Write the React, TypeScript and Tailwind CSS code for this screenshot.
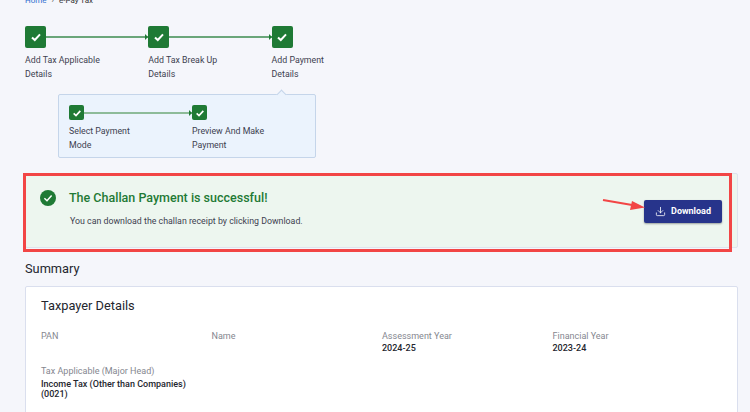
import { Download } from 'lucide-react';

function CheckBox({ small }: { small?: boolean }) {
  return (
    <div
      className={
        small
          ? 'flex h-[15px] w-[15px] shrink-0 items-center justify-center rounded-[2px] bg-[#1f7a35]'
          : 'flex h-[22px] w-[21px] shrink-0 items-center justify-center rounded-[2px] bg-[#1f7a35]'
      }
    >
      <svg
        viewBox="0 0 12 12"
        className={small ? 'h-[10px] w-[10px]' : 'h-[12px] w-[12px]'}
        fill="none"
        stroke="white"
        strokeWidth="2"
      >
        <path d="M2 6.4 L4.8 9 L10 3.4" />
      </svg>
    </div>
  );
}

function Connector({ small }: { small?: boolean }) {
  return (
    <div className={small ? 'relative h-[2px] flex-1 bg-[#8dbb99]' : 'relative h-[2px] flex-1 bg-[#6aa67a]'}>
      <div className="absolute right-0 top-1/2 h-0 w-0 -translate-y-1/2 border-y-[3px] border-l-[3px] border-y-transparent border-l-[#1f7a35]" />
    </div>
  );
}

function Step({ label, last, small }: { label: string[]; last?: boolean; small?: boolean }) {
  return (
    <div className={small ? (last ? 'w-[90px]' : 'w-[123px]') : last ? 'w-[70px]' : 'w-[123.3px]'}>
      <div className="flex items-center">
        <CheckBox small={small} />
        {!last && <Connector small={small} />}
      </div>
      <div
        className={
          small
            ? 'mt-[5px] text-[8.8px] leading-[13.5px] text-[#3d4150]'
            : 'mt-[6px] text-[8.8px] leading-[13.5px] text-[#3d4150]'
        }
      >
        {label.map((line) => (
          <div key={line} className="whitespace-nowrap">
            {line}
          </div>
        ))}
      </div>
    </div>
  );
}

function Field({ label, value }: { label: string; value?: string }) {
  return (
    <div>
      <div className="text-[9px] leading-[12px] text-[#85878f]">{label}</div>
      {value && <div className="mt-px text-[9px] font-medium leading-[10px] text-[#24262e]">{value}</div>}
    </div>
  );
}

export default function App() {
  return (
    <div
      className="h-[412px] w-[750px] overflow-hidden bg-[#f5f6fb] pl-[25px] pr-[12px]"
      style={{ fontFamily: 'Roboto, sans-serif' }}
    >
      {/* Breadcrumb, cut by the top of the page */}
      <div className="-mt-[5px] flex h-[12px] items-center gap-[5px] text-[8px] leading-[12px]">
        <span className="text-[#2f6fd0]">Home</span>
        <span className="text-[#555]">›</span>
        <span className="text-[#333]">e-Pay Tax</span>
      </div>

      {/* Main stepper */}
      <div className="mt-[19px] flex">
        <Step label={['Add Tax Applicable', 'Details']} />
        <Step label={['Add Tax Break Up', 'Details']} />
        <Step label={['Add Payment', 'Details']} last />
      </div>

      {/* Sub stepper */}
      <div className="relative ml-[33px] mt-[13px] flex h-[64px] w-[258px] rounded-[2px] border border-[#c5d5ea] bg-[#ebf3fd] pl-[10px] pt-[10px]">
        <div className="absolute -top-[4px] left-[219px] h-[7px] w-[7px] rotate-45 border-l border-t border-[#c5d5ea] bg-[#ebf3fd]" />
        <Step label={['Select Payment', 'Mode']} small />
        <Step label={['Preview And Make', 'Payment']} small last />
      </div>

      {/* Success alert */}
      <div className="relative mt-[15px] flex h-[75px] items-center justify-between rounded-[2px] border border-[#dfe3ee] bg-[#edf6ef] pl-[14px] pr-[15px]">
        <div className="mb-[5px] flex flex-col">
          <div className="flex items-center gap-[13px]">
            <svg viewBox="0 0 16 16" className="h-[16px] w-[16px]">
              <circle cx="8" cy="8" r="8" fill="#1f7a35" />
              <path d="M4.4 8.2 L7 10.7 L11.6 5.6" fill="none" stroke="white" strokeWidth="1.5" />
            </svg>
            <span className="text-[12.5px] font-medium leading-[18px] text-[#1f7a35]">The Challan Payment is successful!</span>
          </div>
          <span className="ml-[30px] mt-[8px] text-[8.8px] leading-[12px] text-[#3d4150]">
            You can download the challan receipt by clicking Download.
          </span>
        </div>
        <button className="mt-[2px] flex h-[23px] w-[78px] items-center justify-center gap-[5px] rounded-[2px] bg-[#27348b] text-[9px] font-bold text-white shadow-[0_1px_2px_rgba(0,0,0,0.35)]">
          <Download size={11} strokeWidth={1.75} />
          Download
        </button>

        {/* Red annotation box and arrow over the alert */}
        <div className="pointer-events-none absolute -left-[3px] -top-[1px] h-[79px] w-[709px] border-[3px] border-[#f24545]" />
        <svg className="pointer-events-none absolute left-[575px] top-[22px] h-[20px] w-[46px]" viewBox="0 0 46 20">
          <path d="M2 4 L34 9.5" stroke="#f24545" strokeWidth="2" />
          <path d="M44 11.5 L31 5 L29 14 Z" fill="#f24545" />
        </svg>
      </div>

      <div className="mt-[13px] text-[12.8px] leading-[16px] text-[#24262e]">Summary</div>

      {/* Taxpayer details */}
      <div className="mt-[9px] h-[140px] rounded-t-[2px] border border-[#dadfee] bg-white px-[15px] pt-[10px]">
        <div className="text-[12.8px] leading-[18px] text-[#24262e]">Taxpayer Details</div>
        <div className="mt-[15px] grid grid-cols-[170.5px_170.5px_170.5px_1fr]">
          <Field label="PAN" />
          <Field label="Name" />
          <Field label="Assessment Year" value="2024-25" />
          <Field label="Financial Year" value="2023-24" />
        </div>
        <div className="mt-[12px] w-[170px]">
          <div className="text-[9px] leading-[12px] text-[#85878f]">Tax Applicable (Major Head)</div>
          <div className="mt-[2px] text-[9px] font-medium leading-[10px] text-[#24262e]">
            Income Tax (Other than Companies) (0021)
          </div>
        </div>
      </div>
    </div>
  );
}
